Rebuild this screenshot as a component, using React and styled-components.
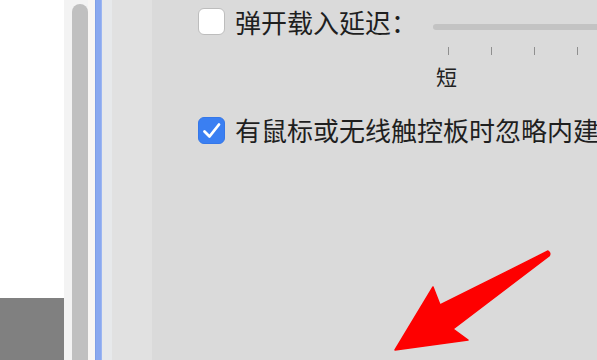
import React from "react";
import styled, { createGlobalStyle } from "styled-components";

const Global = createGlobalStyle`
  html, body { margin: 0; padding: 0; }
  body { width: 597px; height: 360px; overflow: hidden; background: #dadada; }
  #root { height: 360px; }
`;

const Screen = styled.div`
  position: relative;
  display: flex;
  width: 597px;
  height: 360px;
  overflow: hidden;
  font-family: "Noto Sans CJK SC", "Noto Sans", sans-serif;
  color: #1f1f1f;
`;

const LeftPane = styled.div`
  width: 64px;
  flex: none;
  display: flex;
  flex-direction: column;
  justify-content: flex-end;
  background: #ffffff;
`;

const GrayBlock = styled.div`
  height: 62px;
  background: #808080;
`;

const Strip = styled.div`
  width: ${(p) => p.$w}px;
  flex: none;
  background: ${(p) => p.$bg};
`;

const ScrollTrack = styled.div`
  width: 16px;
  flex: none;
  background: #f3f3f3;
  padding-top: 4px;
  display: flex;
`;

const ScrollThumb = styled.div`
  flex: 1;
  background: #c0c0c0;
  border-radius: 8px 8px 0 0;
`;

const BlueLine = styled.div`
  width: 7px;
  flex: none;
  background: #8aa9f0;
  box-shadow: inset 1px 0 0 #7f9fe6, inset -1px 0 0 #9bb6f2;
`;

const Content = styled.div`
  flex: 1;
  min-width: 0;
  background: #dadada;
  padding: 8px 0 0 46px;
  box-sizing: border-box;
  white-space: nowrap;
  overflow: hidden;
`;

const Row = styled.div`
  display: flex;
  align-items: ${(p) => (p.$top ? "flex-start" : "center")};
  margin-top: ${(p) => p.$mt || 0}px;
`;

const Box = styled.div`
  width: 27px;
  height: 27px;
  flex: none;
  box-sizing: border-box;
  border-radius: 6px;
  background: ${(p) => (p.$checked ? "#3a7ff2" : "#ffffff")};
  border: 1px solid ${(p) => (p.$checked ? "#3577e8" : "#bdbdbd")};
  display: flex;
  align-items: center;
  justify-content: center;
`;

const Label = styled.span`
  margin-left: 10px;
  font-size: 26px;
  line-height: 30px;
  letter-spacing: 0;
  color: #1f1f1f;
  margin-top: ${(p) => p.$mt || 0}px;
`;

const Slider = styled.div`
  margin-left: 16px;
  padding-top: 16px;
  display: flex;
  flex-direction: column;
`;

const Track = styled.div`
  width: 320px;
  height: 6px;
  border-radius: 3px;
  background: #c3c3c3;
`;

const Ticks = styled.div`
  display: flex;
  gap: 42px;
  padding-left: 15px;
  margin-top: 17px;
`;

const Tick = styled.div`
  width: 1px;
  height: 8px;
  background: #8f8f8f;
`;

const TickLabel = styled.div`
  font-size: 21px;
  line-height: 30px;
  margin-top: 6px;
  padding-left: 3px;
  color: #222;
`;

const Arrow = styled.svg`
  position: absolute;
  left: 0;
  top: 0;
  pointer-events: none;
`;

function Check() {
  return (
    <svg width="25" height="25" viewBox="0 0 25 25">
      <path d="M5.5 13.5 L10.5 18.5 L20 6.5" fill="none" stroke="#fff" strokeWidth="2.8" strokeLinecap="round" strokeLinejoin="round" />
    </svg>
  );
}

export default function App() {
  return (
    <>
      <Global />
      <Screen>
        <LeftPane>
          <GrayBlock />
        </LeftPane>
        <Strip $w={8} $bg="#f3f3f3" />
        <ScrollTrack>
          <ScrollThumb />
        </ScrollTrack>
        <Strip $w={7} $bg="#f8f6f4" />
        <BlueLine />
        <Strip $w={10} $bg="#e7e9eb" />
        <Strip $w={40} $bg="#e1e1e1" />
        <Content>
          <Row $top>
            <Box />
            <Label $mt={-1}>弹开载入延迟：</Label>
            <Slider>
              <Track />
              <Ticks>
                <Tick />
                <Tick />
                <Tick />
                <Tick />
                <Tick />
              </Ticks>
              <TickLabel>短</TickLabel>
            </Slider>
          </Row>
          <Row $mt={24}>
            <Box $checked>
              <Check />
            </Box>
            <Label>有鼠标或无线触控板时忽略内建触控板</Label>
          </Row>
        </Content>
        <Arrow width="597" height="360" viewBox="0 0 597 360">
          <path
            d="M548 251 Q551 253 549 256 L453 329 L468 340 L395 350 L433 287 L440 305 Z"
            fill="#fe0000"
            stroke="#fe0000"
            strokeWidth="1.5"
            strokeLinejoin="round"
          />
        </Arrow>
      </Screen>
    </>
  );
}
